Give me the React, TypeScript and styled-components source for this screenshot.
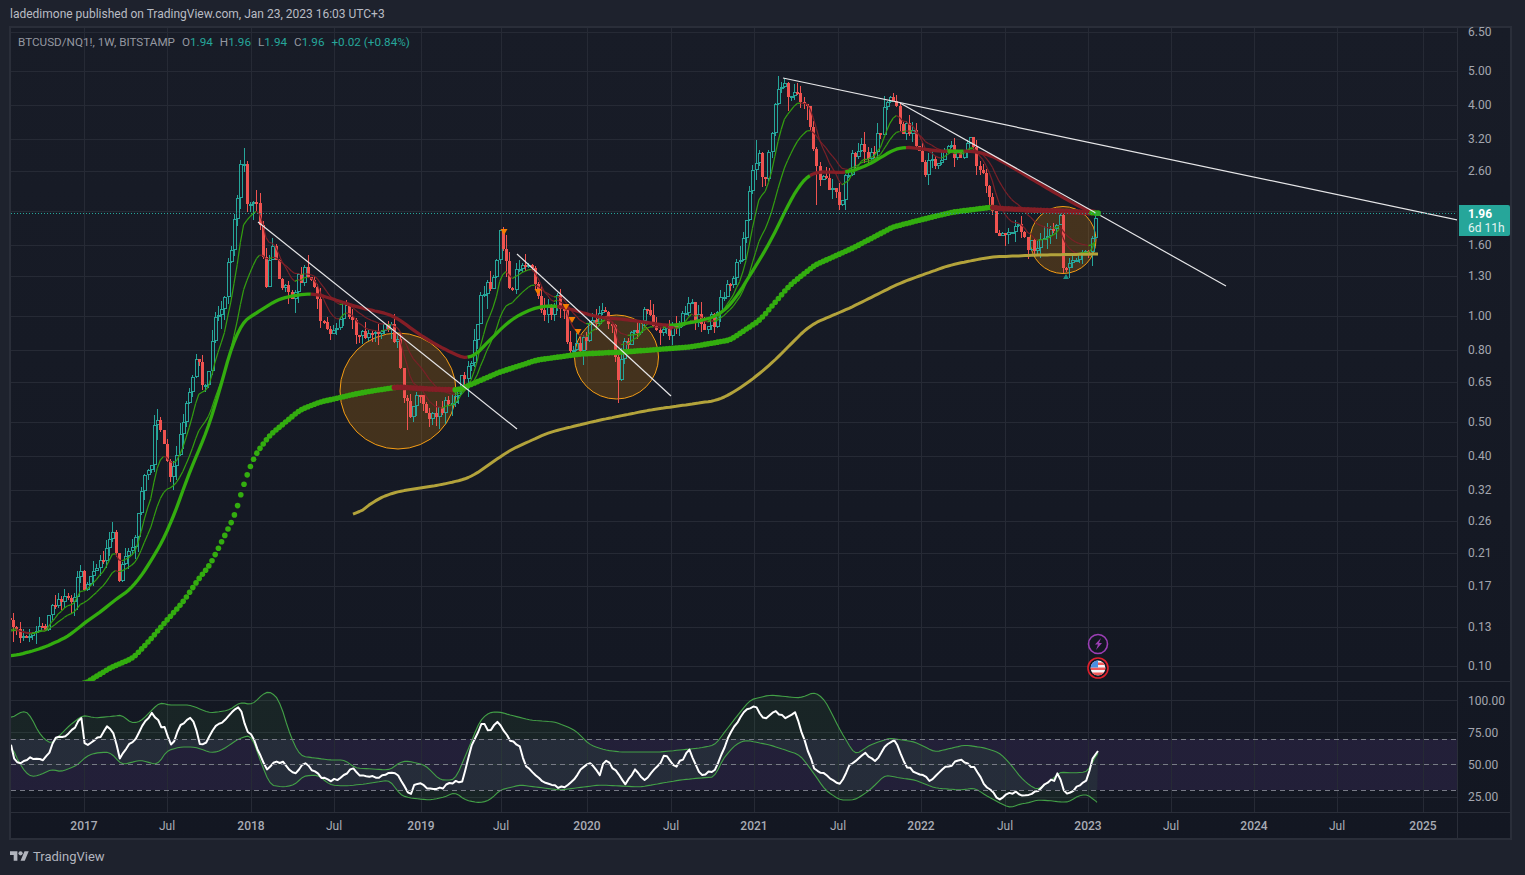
import { ReactElement } from "react";
import styled, { createGlobalStyle } from "styled-components";

type Pt = [number, number];

const GREEN = "#33ad0f";
const RED = "#841e26";
const TEAL = "#26a69a";
const CANDLE_RED = "#ef5350";
const BARS = 340;
const STEP = 3.2;

const barX = (i: number) => 10 + STEP * i;

const sampleAt = (pts: Pt[], x: number): number => {
  if (x <= pts[0][0]) return pts[0][1];
  for (let i = 1; i < pts.length; i++) {
    if (x <= pts[i][0]) {
      const t = (x - pts[i - 1][0]) / (pts[i][0] - pts[i - 1][0] || 1);
      return pts[i - 1][1] + (pts[i][1] - pts[i - 1][1]) * t;
    }
  }
  return pts[pts.length - 1][1];
};

// resample to one point per bar, then a moving average over +-win bars
const smooth = (pts: Pt[], win: number): Pt[] => {
  const raw: Pt[] = [];
  const last = pts[pts.length - 1][0];
  for (let x = pts[0][0]; x < last; x += STEP) raw.push([x, sampleAt(pts, x)]);
  raw.push(pts[pts.length - 1]);
  return raw.map((p, i) => {
    const from = Math.max(0, i - win);
    const to = Math.min(raw.length - 1, i + win);
    let sum = 0;
    for (let j = from; j <= to; j++) sum += raw[j][1];
    return [p[0], sum / (to - from + 1)] as Pt;
  });
};

const toPoints = (pts: Pt[]) => pts.map((p) => `${p[0].toFixed(1)},${p[1].toFixed(1)}`).join(" ");

// price path, read off in chart pixels
const pricePath: Pt[] = [
  [10, 618], [15, 632], [22, 637], [30, 632], [45, 628], [50, 608], [60, 600], [70, 598], [80, 575], [85, 590],
  [95, 575], [105, 560], [112, 535], [118, 575], [125, 555], [135, 540], [142, 480], [150, 470], [155, 420],
  [162, 440], [170, 480], [178, 450], [185, 400], [195, 360], [205, 385], [215, 320], [225, 290], [235, 215],
  [243, 152], [248, 210], [255, 190], [260, 230], [265, 290], [272, 250], [280, 275], [290, 305], [300, 275],
  [310, 275], [322, 320], [330, 340], [345, 305], [355, 335], [370, 335], [390, 330], [398, 345], [402, 385],
  [410, 425], [418, 385], [428, 415], [440, 410], [455, 395], [462, 370], [470, 375], [480, 300], [490, 285],
  [500, 235], [510, 290], [520, 265], [530, 270], [540, 305], [550, 310], [560, 300], [570, 350], [580, 345],
  [590, 325], [600, 310], [610, 320], [618, 385], [625, 345], [635, 335], [645, 310], [655, 325], [665, 330],
  [675, 335], [690, 305], [700, 325], [715, 320], [725, 290], [735, 270], [745, 240], [750, 180], [757, 150],
  [765, 185], [775, 100], [783, 88], [795, 100], [805, 95], [812, 130], [816, 170], [820, 175], [828, 180],
  [840, 200], [850, 165], [860, 140], [870, 155], [880, 135], [885, 100], [895, 110], [905, 130], [915, 140],
  [925, 170], [935, 165], [945, 150], [955, 155], [970, 145], [980, 175], [990, 190], [997, 240], [1005, 240],
  [1015, 225], [1025, 240], [1035, 245], [1045, 235], [1060, 218], [1063, 268], [1070, 265], [1080, 255],
  [1090, 250], [1094, 220], [1097, 213],
];

const wickTops: Pt[] = [[243, 148], [783, 78], [503, 228], [884, 96], [897, 98], [757, 140], [1094, 210], [155, 415], [110, 532]];
const wickBottoms: Pt[] = [[618, 403], [1063, 272], [408, 430], [432, 425], [845, 210], [172, 490], [1005, 246], [815, 205], [13, 642]];

const makeRandom = (seed: number) => () => {
  seed = (seed + 0x6d2b79f5) | 0;
  let t = Math.imul(seed ^ (seed >>> 15), 1 | seed);
  t = (t + Math.imul(t ^ (t >>> 7), 61 | t)) ^ t;
  return ((t ^ (t >>> 14)) >>> 0) / 4294967296;
};

interface Bar {
  x: number;
  open: number;
  close: number;
  high: number;
  low: number;
}

const buildBars = (): Bar[] => {
  const rnd = makeRandom(20230123);
  const bars: Bar[] = [];
  let prev = pricePath[0][1];
  for (let i = 0; i < BARS; i++) {
    const x = barX(i);
    const amp = x < 70 ? 9 : x > 1040 ? 8 : 17;
    const close = sampleAt(pricePath, x) + (rnd() - 0.5) * amp;
    const top = Math.min(prev, close);
    const bottom = Math.max(prev, close);
    bars.push({ x, open: prev, close, high: top - rnd() * rnd() * 16, low: bottom + rnd() * rnd() * 18 });
    prev = close;
  }
  wickTops.forEach(([x, y]) => {
    const b = bars[Math.round((x - 10) / STEP)];
    b.high = Math.min(b.high, y);
  });
  wickBottoms.forEach(([x, y]) => {
    const b = bars[Math.round((x - 10) / STEP)];
    b.low = Math.max(b.low, y);
  });
  return bars;
};

const bars = buildBars();

const ema = (len: number): Pt[] => {
  const k = 2 / (len + 1);
  let v = bars[0].close + 12;
  return bars.map((b) => {
    v = b.close * k + v * (1 - k);
    return [b.x, v] as Pt;
  });
};

const fastLine = ema(8);
const slowLine = ema(18);

// the two heavy averages change colour with their direction
const thickSections: { color: string; pts: Pt[] }[] = [
  { color: GREEN, pts: [[10, 657], [40, 649], [50, 645], [73, 634], [83, 623], [100, 613], [113, 601], [133, 588], [143, 573], [152, 560], [170, 527], [190, 470], [210, 425], [225, 370], [238, 325], [250, 317], [280, 298], [312, 293]] },
  { color: RED, pts: [[312, 293], [330, 298], [357, 307], [393, 315], [420, 335], [440, 347], [470, 361]] },
  { color: GREEN, pts: [[470, 361], [480, 350], [495, 335], [510, 320], [525, 312], [540, 306], [560, 306]] },
  { color: RED, pts: [[560, 306], [597, 317], [630, 320], [670, 326]] },
  { color: GREEN, pts: [[670, 326], [700, 321], [720, 315], [735, 300], [750, 275], [770, 243], [787, 207], [800, 183], [812, 172]] },
  { color: RED, pts: [[812, 172], [830, 172], [847, 173]] },
  { color: GREEN, pts: [[847, 173], [873, 163], [887, 153], [900, 147], [907, 147]] },
  { color: RED, pts: [[907, 147], [930, 150], [950, 152]] },
  { color: GREEN, pts: [[950, 152], [965, 150]] },
  { color: RED, pts: [[965, 151], [985, 153], [1000, 160], [1020, 172], [1050, 190], [1080, 207], [1095, 213]] },
];

const dotSections: { color: string; pts: Pt[] }[] = [
  { color: GREEN, pts: [[84, 684], [110, 668], [133, 658], [150, 640], [167, 620], [183, 602], [200, 577], [210, 565], [235, 515], [245, 480], [255, 455], [270, 435], [300, 410], [320, 402], [360, 393], [397, 387]] },
  { color: RED, pts: [[397, 387], [430, 389], [458, 390]] },
  { color: GREEN, pts: [[458, 390], [500, 372], [537, 360], [580, 354], [623, 352], [690, 347], [730, 340], [760, 320], [790, 285], [815, 265], [853, 248], [893, 227], [920, 220], [953, 212], [993, 207]] },
  { color: RED, pts: [[993, 208], [1030, 210], [1060, 211], [1095, 213]] },
  { color: GREEN, pts: [[1095, 213], [1098, 213]] },
];

const inRange = (all: Pt[], from: number, to: number) => all.filter((p) => p[0] >= from - STEP && p[0] <= to + 0.01);

const thickAll = smooth(thickSections.flatMap((s) => s.pts), 3);
const dotsAll = smooth(dotSections.flatMap((s) => s.pts), 1);

const goldLine = smooth([
  [353, 518], [375, 500], [395, 492], [440, 485], [470, 478], [510, 450], [550, 432], [600, 420], [650, 410],
  [720, 400], [745, 385], [770, 365], [810, 325], [850, 308], [900, 283], [950, 265], [990, 257], [1040, 255], [1098, 254],
], 3);

const trendLines: [number, number, number, number][] = [
  [783, 78, 1458, 220],
  [900, 103, 1226, 286],
  [258, 222, 517, 429],
  [517, 254, 671, 396],
];

const downMarks: Pt[] = [[504, 232], [538, 292], [566, 307], [572, 320], [578, 332]];

const priceTicks = [
  { y: 32, label: "6.50" }, { y: 71, label: "5.00" }, { y: 105, label: "4.00" }, { y: 139, label: "3.20" },
  { y: 171, label: "2.60" }, { y: 211, label: "" }, { y: 245, label: "1.60" }, { y: 276, label: "1.30" },
  { y: 316, label: "1.00" }, { y: 350, label: "0.80" }, { y: 382, label: "0.65" }, { y: 422, label: "0.50" },
  { y: 456, label: "0.40" }, { y: 490, label: "0.32" }, { y: 521, label: "0.26" }, { y: 553, label: "0.21" },
  { y: 586, label: "0.17" }, { y: 627, label: "0.13" }, { y: 666, label: "0.10" },
];

const rsiTicks = [
  { y: 701, label: "100.00" }, { y: 733, label: "75.00" }, { y: 765, label: "50.00" }, { y: 797, label: "25.00" },
];

const timeTicks = [
  { x: 84, label: "2017", year: true }, { x: 167, label: "Jul" }, { x: 251, label: "2018", year: true },
  { x: 334, label: "Jul" }, { x: 421, label: "2019", year: true }, { x: 501, label: "Jul" },
  { x: 587, label: "2020", year: true }, { x: 671, label: "Jul" }, { x: 754, label: "2021", year: true },
  { x: 838, label: "Jul" }, { x: 921, label: "2022", year: true }, { x: 1005, label: "Jul" },
  { x: 1088, label: "2023", year: true }, { x: 1171, label: "Jul" }, { x: 1254, label: "2024", year: true },
  { x: 1337, label: "Jul" }, { x: 1423, label: "2025", year: true },
];

const rsiRaw: Pt[] = [
  [11, 745], [14, 760], [22, 764], [30, 756], [36, 760], [42, 760], [50, 752], [54, 738], [65, 738], [70, 732], [82, 718],
  [85, 748], [100, 737], [108, 725], [114, 735], [120, 759], [128, 745], [135, 740], [145, 722], [153, 713], [162, 727],
  [165, 727], [172, 748], [180, 725], [190, 718], [194, 722], [200, 744], [205, 745], [215, 726], [225, 720], [232, 712],
  [240, 706], [247, 732], [252, 735], [258, 752], [267, 770], [275, 762], [283, 763], [295, 774], [305, 762], [318, 775],
  [330, 782], [343, 777], [352, 768], [360, 777], [367, 775], [375, 778], [390, 772], [397, 775], [410, 796], [415, 782],
  [430, 789], [440, 789], [450, 783], [462, 781], [472, 745], [482, 722], [490, 733], [497, 720], [510, 740], [520, 745],
  [525, 765], [535, 775], [545, 782], [560, 788], [570, 785], [580, 770], [590, 762], [600, 775], [605, 758], [615, 770],
  [625, 785], [635, 770], [645, 780], [655, 770], [665, 755], [675, 768], [690, 750], [700, 775], [715, 770], [725, 745],
  [735, 725], [745, 710], [755, 705], [765, 720], [775, 712], [785, 718], [795, 712], [805, 742], [815, 770], [825, 775],
  [840, 785], [850, 765], [865, 752], [875, 762], [885, 745], [895, 740], [905, 765], [915, 772], [930, 780], [945, 768],
  [960, 760], [975, 768], [985, 785], [995, 795], [1000, 799], [1010, 793], [1020, 793], [1027, 797], [1033, 792],
  [1038, 792], [1043, 785], [1050, 781], [1055, 780], [1058, 771], [1065, 793], [1070, 793], [1077, 786], [1087, 779],
  [1093, 756], [1098, 751],
];

// weekly wobble on top of the hand-read outline
const rsiLine: Pt[] = (() => {
  const rnd = makeRandom(77);
  const base = smooth(rsiRaw, 0);
  return base.map((p, i) => [p[0], p[1] + (i === base.length - 1 ? 0 : (rnd() - 0.5) * 3)] as Pt);
})();

const bandUpper = smooth([
  [11, 718], [25, 710], [30, 715], [40, 735], [52, 745], [55, 740], [70, 725], [83, 715], [95, 718], [115, 716], [123, 715],
  [130, 723], [140, 722], [160, 702], [168, 705], [190, 705], [210, 713], [230, 710], [240, 702], [252, 705], [265, 692],
  [272, 692], [280, 702], [290, 735], [300, 756], [315, 758], [330, 760], [345, 760], [355, 768], [390, 770], [400, 762],
  [408, 761], [425, 765], [440, 780], [455, 780], [470, 745], [480, 720], [490, 712], [500, 712], [510, 715], [530, 720],
  [555, 722], [575, 730], [590, 745], [605, 750], [620, 752], [640, 752], [660, 752], [680, 750], [700, 748], [715, 745],
  [730, 725], [750, 700], [770, 695], [800, 698], [815, 692], [825, 700], [840, 730], [855, 755], [870, 745], [890, 738],
  [915, 742], [935, 752], [965, 745], [985, 748], [1000, 753], [1013, 767], [1020, 777], [1033, 788], [1040, 790],
  [1043, 785], [1055, 778], [1058, 772], [1073, 773], [1088, 772], [1098, 751],
], 1);

const bandLower = smooth([
  [11, 745], [20, 765], [30, 777], [40, 775], [52, 769], [60, 772], [78, 765], [85, 757], [95, 753], [110, 752], [122, 765],
  [140, 760], [158, 765], [166, 751], [180, 747], [195, 747], [212, 753], [222, 750], [240, 738], [252, 735], [258, 755],
  [270, 785], [283, 787], [295, 785], [303, 776], [318, 775], [330, 785], [345, 786], [365, 784], [390, 780], [400, 795],
  [410, 798], [430, 800], [445, 797], [455, 792], [465, 800], [480, 803], [490, 800], [500, 790], [520, 785], [560, 790],
  [600, 785], [640, 787], [680, 780], [700, 778], [715, 777], [722, 760], [735, 745], [745, 740], [770, 745], [800, 755],
  [815, 775], [825, 790], [840, 800], [855, 800], [870, 790], [885, 775], [900, 778], [915, 780], [935, 788], [960, 790],
  [975, 788], [985, 795], [1000, 803], [1010, 808], [1020, 804], [1028, 803], [1037, 800], [1055, 801], [1058, 802],
  [1070, 802], [1075, 797], [1087, 794], [1092, 798], [1097, 803],
], 1);

const GlobalStyle = createGlobalStyle`
  html, body {
    margin: 0;
    height: 100%;
    background: #1e222d;
  }
  body {
    font-family: Roboto, "Liberation Sans", sans-serif;
    color: #b2b5be;
  }
`;

const Page = styled.div`
  display: flex;
  flex-direction: column;
  height: 875px;
  width: 1525px;
  padding: 0 13px 0 9px;
  box-sizing: border-box;
  overflow: hidden;
`;

const TitleBar = styled.div`
  height: 28px;
  padding-left: 1px;
  margin-bottom: -2px;
  display: flex;
  align-items: center;
  font-size: 12px;
  color: #b9bcc4;
  white-space: nowrap;
`;

const ChartFrame = styled.div`
  display: grid;
  grid-template-columns: 1fr 52px;
  grid-template-rows: 654px 131px 25px;
  height: 814px;
  box-sizing: border-box;
  border: 2px solid #2a2e39;
  background: linear-gradient(180deg, #181c27 0%, #131722 100%);
`;

const Pane = styled.div`
  position: relative;
  border-bottom: 1px solid #2a2e39;
  border-right: 1px solid #2a2e39;
`;

const PaneSvg = styled.svg`
  display: block;
  position: absolute;
  inset: 0;
`;

const Legend = styled.div`
  position: absolute;
  left: 7px;
  top: 6px;
  display: flex;
  gap: 7px;
  font-size: 11.7px;
  line-height: 16px;
  color: #9598a1;
  white-space: nowrap;
`;

const LegendItem = styled.span`
  color: #9598a1;
`;

const LegendValue = styled.span`
  color: ${TEAL};
`;

const PriceAxis = styled.div`
  position: relative;
  border-bottom: 1px solid #2a2e39;
`;

const AxisLabel = styled.span`
  position: absolute;
  left: 10px;
  font-size: 12px;
  line-height: 14px;
  color: #a3a6af;
  transform: translateY(-50%);
`;

const PriceTag = styled.div`
  position: absolute;
  left: 1px;
  right: 0;
  top: 177px;
  height: 31px;
  background: ${TEAL};
  border-radius: 0 2px 2px 0;
  padding-left: 9px;
  display: flex;
  flex-direction: column;
  justify-content: center;
  font-size: 12px;
  line-height: 14px;
  color: #fff;
`;

const TagPrice = styled.span`
  font-weight: 700;
`;

const TagTimer = styled.span`
  color: #e3f3f1;
`;

const TimeAxis = styled.div`
  position: relative;
  border-right: 1px solid #2a2e39;
`;

const TimeLabel = styled.span<{ $year?: boolean }>`
  position: absolute;
  top: 5px;
  font-size: 12px;
  line-height: 16px;
  transform: translateX(-50%);
  color: #a9acb5;
  font-weight: ${(p) => (p.$year ? 500 : 400)};
`;

const AxisCorner = styled.div``;

const Footer = styled.div`
  flex: 1;
  display: flex;
  align-items: center;
  gap: 4px;
  padding: 0 0 3px 1px;
  font-size: 13px;
  color: #b2b5be;
`;

const TvLogo = (): ReactElement => (
  <svg width="19" height="15" viewBox="0 0 36 28" fill="#b2b5be">
    <path d="M14 22H7V11H0V4h14v18zM28 22h-8l7.5-18h8L28 22z" />
    <circle cx="20" cy="8" r="4" />
  </svg>
);

const SlopeLine = ({ pts, width, rising, falling }: { pts: Pt[]; width: number; rising: string; falling: string }) => (
  <g strokeWidth={width} fill="none">
    {pts.slice(1).map((p, i) => (
      <line key={i} x1={pts[i][0]} y1={pts[i][1]} x2={p[0]} y2={p[1]} stroke={p[1] <= pts[i][1] ? rising : falling} />
    ))}
  </g>
);

const Candles = (): ReactElement => (
  <g shapeRendering="crispEdges">
    {bars.map((b, i) => {
      const cx = Math.round(b.x) + 0.5;
      const up = b.close < b.open;
      const top = Math.round(Math.min(b.open, b.close));
      const bottom = Math.max(Math.round(Math.max(b.open, b.close)), top + 2);
      const color = up ? TEAL : CANDLE_RED;
      return (
        <g key={i}>
          <line x1={cx} x2={cx} y1={b.high} y2={top} stroke={color} />
          <line x1={cx} x2={cx} y1={bottom} y2={b.low} stroke={color} />
          {up ? (
            <rect x={cx - 1} y={top + 0.5} width={3} height={bottom - top - 1} fill="none" stroke={TEAL} />
          ) : (
            <rect x={cx - 1.5} y={top} width={3} height={bottom - top} fill={CANDLE_RED} />
          )}
        </g>
      );
    })}
  </g>
);

const Grid = ({ ys, from, to }: { ys: number[]; from: number; to: number }) => (
  <g stroke="#262a35" strokeWidth="1" shapeRendering="crispEdges">
    {timeTicks.map((t) => (
      <line key={t.x} x1={t.x + 0.5} x2={t.x + 0.5} y1={from} y2={to} />
    ))}
    {ys.map((y) => (
      <line key={y} x1={0} x2={1460} y1={y + 0.5} y2={y + 0.5} />
    ))}
  </g>
);

const MainChart = (): ReactElement => (
  <PaneSvg width="1446" height="653" viewBox="11 28 1446 653">
    <Grid ys={priceTicks.map((t) => t.y)} from={28} to={681} />
    <ellipse cx={398} cy={391} rx={58} ry={58} fill="rgba(255,152,0,0.2)" stroke="#f59d14" strokeWidth={1} />
    <ellipse cx={616.5} cy={357} rx={42} ry={42} fill="rgba(255,152,0,0.2)" stroke="#f59d14" strokeWidth={1} />
    <ellipse cx={1063} cy={240} rx={33} ry={33.5} fill="rgba(255,152,0,0.2)" stroke="#f59d14" strokeWidth={1} />
    <Candles />
    <SlopeLine pts={fastLine} width={1.2} rising="#34a010" falling="#7a2028" />
    <SlopeLine pts={slowLine} width={1.2} rising="#34a010" falling="#7a2028" />
    {thickSections.map((s, i) => (
      <polyline
        key={i}
        points={toPoints(inRange(thickAll, s.pts[0][0], s.pts[s.pts.length - 1][0]))}
        fill="none"
        stroke={s.color}
        strokeWidth={3.3}
        strokeLinejoin="round"
      />
    ))}
    {dotSections.map((s, i) => (
      <g key={i} fill={s.color}>
        {inRange(dotsAll, s.pts[0][0], s.pts[s.pts.length - 1][0]).map((d) => (
          <circle key={d[0]} cx={d[0]} cy={d[1]} r={2.8} />
        ))}
      </g>
    ))}
    <polyline points={toPoints(goldLine)} fill="none" stroke="#b3a33b" strokeWidth={3} strokeLinejoin="round" />
    {trendLines.map((l) => (
      <line key={l[0]} x1={l[0]} y1={l[1]} x2={l[2]} y2={l[3]} stroke="#e6e6e8" strokeWidth={1.2} />
    ))}
    <line x1={11} x2={1458} y1={213.5} y2={213.5} stroke={TEAL} strokeDasharray="1 2" shapeRendering="crispEdges" />
    {downMarks.map((m) => (
      <path key={m[0]} d={`M${m[0] - 3.5} ${m[1] - 3}h7l-3.5 6z`} fill="#f57c00" />
    ))}
    <path d="M671 331l-3-5h6z" fill="#a3243c" />
    <path d="M1063 279l3-5 3 5z" fill="#1c8f84" />
    <rect x={1095.5} y={211} width={5} height={5} fill="#2fa82a" />
    {/* event markers */}
    <circle cx={1098} cy={644} r={9.5} fill="#131722" stroke="#9c3fb5" strokeWidth={1.6} />
    <path d="M1101 638l-6 6.5h3l-2 5.500 6-7h-3z" fill="#9c3fb5" />
    <circle cx={1098} cy={668} r={10} fill="#131722" stroke="#e0202c" strokeWidth={1.6} />
    <clipPath id="flag">
      <circle cx={1098} cy={668} r={7.4} />
    </clipPath>
    <g clipPath="url(#flag)">
      <rect x={1090} y={660} width={16} height={16} fill="#f4f4f6" />
      <rect x={1090} y={662.5} width={16} height={2.5} fill="#ef5a5a" />
      <rect x={1090} y={667.5} width={16} height={2.5} fill="#ef5a5a" />
      <rect x={1090} y={672.5} width={16} height={2.5} fill="#ef5a5a" />
      <rect x={1090} y={660} width={8} height={7.5} fill="#4a90e2" />
    </g>
  </PaneSvg>
);

const RsiChart = (): ReactElement => (
  <PaneSvg width="1446" height="130" viewBox="11 682 1446 130">
    <rect x={11} y={739} width={1447} height={51} fill="rgba(126,87,194,0.14)" />
    <Grid ys={[700, 732, 764, 797]} from={682} to={812} />
    <polygon points={toPoints([...bandUpper, ...[...bandLower].reverse()])} fill="rgba(76,175,80,0.09)" />
    <polyline points={toPoints(bandUpper)} fill="none" stroke="#43a047" strokeWidth={1.1} />
    <polyline points={toPoints(bandLower)} fill="none" stroke="#43a047" strokeWidth={1.1} />
    <polyline points={toPoints(rsiLine)} fill="none" stroke="#fff" strokeWidth={2} strokeLinejoin="round" />
    <g stroke="#787b86" strokeDasharray="5 4" shapeRendering="crispEdges">
      <line x1={11} x2={1458} y1={739.5} y2={739.5} />
      <line x1={11} x2={1458} y1={764.5} y2={764.5} />
      <line x1={11} x2={1458} y1={790.5} y2={790.5} />
    </g>
  </PaneSvg>
);

const App = (): ReactElement => {
  return (
    <>
      <GlobalStyle />
      <Page>
        <TitleBar>ladedimone published on TradingView.com, Jan 23, 2023 16:03 UTC+3</TitleBar>
        <ChartFrame>
          <Pane>
            <MainChart />
            <Legend>
              <LegendItem>BTCUSD/NQ1!, 1W, BITSTAMP</LegendItem>
              <LegendItem>O<LegendValue>1.94</LegendValue></LegendItem>
              <LegendItem>H<LegendValue>1.96</LegendValue></LegendItem>
              <LegendItem>L<LegendValue>1.94</LegendValue></LegendItem>
              <LegendItem>C<LegendValue>1.96</LegendValue></LegendItem>
              <LegendValue>+0.02 (+0.84%)</LegendValue>
            </Legend>
          </Pane>
          <PriceAxis>
            {priceTicks.filter((t) => t.label).map((t) => (
              <AxisLabel key={t.label} style={{ top: t.y - 28 }}>{t.label}</AxisLabel>
            ))}
            <PriceTag>
              <TagPrice>1.96</TagPrice>
              <TagTimer>6d 11h</TagTimer>
            </PriceTag>
          </PriceAxis>
          <Pane>
            <RsiChart />
          </Pane>
          <PriceAxis>
            {rsiTicks.map((t) => (
              <AxisLabel key={t.label} style={{ top: t.y - 682 }}>{t.label}</AxisLabel>
            ))}
          </PriceAxis>
          <TimeAxis>
            {timeTicks.map((t) => (
              <TimeLabel key={t.x} $year={t.year} style={{ left: t.x - 11 }}>{t.label}</TimeLabel>
            ))}
          </TimeAxis>
          <AxisCorner />
        </ChartFrame>
        <Footer>
          <TvLogo />
          TradingView
        </Footer>
      </Page>
    </>
  );
};

export default App;
